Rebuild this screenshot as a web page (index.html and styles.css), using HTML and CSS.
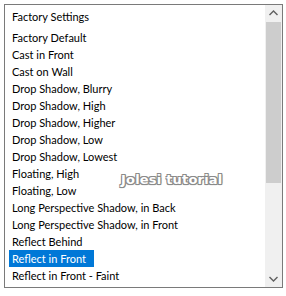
FILE: index.html
```html
<!DOCTYPE html>
<html lang="en">
<head>
    <meta charset="UTF-8" />
    <title>Factory Settings</title>
    <link rel="stylesheet" href="styles.css">
</head>
<body>
    <div class="listbox">
        <div class="list">
            <div class="group">Factory Settings</div>
            <ul class="items">
                <li><span>Factory Default</span></li>
                <li><span>Cast in Front</span></li>
                <li><span>Cast on Wall</span></li>
                <li><span>Drop Shadow, Blurry</span></li>
                <li><span>Drop Shadow, High</span></li>
                <li><span>Drop Shadow, Higher</span></li>
                <li><span>Drop Shadow, Low</span></li>
                <li><span>Drop Shadow, Lowest</span></li>
                <li><span>Floating, High</span></li>
                <li><span>Floating, Low</span></li>
                <li><span>Long Perspective Shadow, in Back</span></li>
                <li><span>Long Perspective Shadow, in Front</span></li>
                <li><span>Reflect Behind</span></li>
                <li class="selected"><span>Reflect in Front</span></li>
                <li><span>Reflect in Front - Faint</span></li>
            </ul>
        </div>
        <div class="scrollbar">
            <div class="arrow">
                <svg width="17" height="17" viewBox="0 0 17 17"><polyline points="4.5,10 8.5,6 12.5,10" /></svg>
            </div>
            <div class="track">
                <div class="thumb"></div>
            </div>
            <div class="arrow">
                <svg width="17" height="17" viewBox="0 0 17 17"><polyline points="4.5,7 8.5,11 12.5,7" /></svg>
            </div>
        </div>
        <div class="watermark">Jolesi tutorial</div>
    </div>
</body>
</html>
```

FILE: styles.css
```css
* {
    box-sizing: border-box;
    margin: 0;
    padding: 0;
}

body {
    background-color: #ffffff;
    font-family: Lato, "Liberation Sans", Arial, sans-serif;
    font-size: 11px;
    color: #000000;
}

.listbox {
    position: relative;
    margin: 4px;
    width: 279px;
    height: 284px;
    border: 1px solid #7a7a7a;
    display: flex;
    overflow: hidden;
}

.list {
    flex: 1;
    overflow: hidden;
}

.group {
    height: 24px;
    line-height: 24px;
    padding-left: 7px;
}

.items {
    list-style: none;
}

.items li {
    height: 17px;
    line-height: 17px;
    padding-left: 4px;
    white-space: nowrap;
}

.items span {
    display: inline-block;
    padding: 0 8px 0 3px;
}

.items .selected span {
    background-color: #0078d7;
    color: #ffffff;
}

.scrollbar {
    width: 17px;
    background-color: #f0f0f0;
    display: flex;
    flex-direction: column;
}

.arrow {
    height: 17px;
}

.arrow svg {
    display: block;
}

.arrow polyline {
    fill: none;
    stroke: #606060;
    stroke-width: 1.4;
}

.track {
    flex: 1;
}

.thumb {
    height: 161px;
    margin: 0 1px;
    background-color: #cdcdcd;
}

.watermark {
    position: absolute;
    left: 116px;
    top: 167px;
    font-family: "DejaVu Sans", sans-serif;
    font-weight: bold;
    font-size: 13px;
    color: #ffffff;
    letter-spacing: 0.2px;
    text-shadow: 1px 1px 0 #8a8a8a, -1px -1px 0 #8a8a8a, 1px -1px 0 #8a8a8a, -1px 1px 0 #8a8a8a, 0 1px 1px #777777, 1px 0 1px #777777;
}
```
